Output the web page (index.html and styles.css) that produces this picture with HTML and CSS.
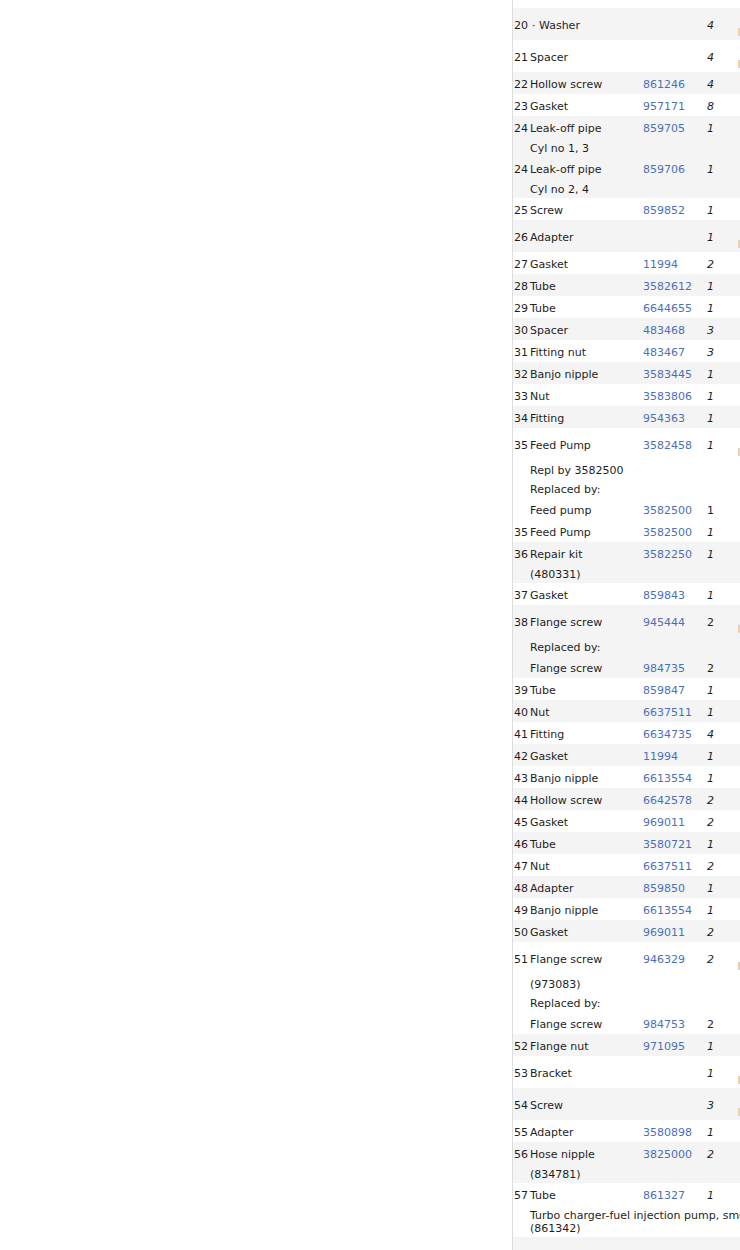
FILE: index.html
```html
<!DOCTYPE html>
<html>
<head>
<meta charset="utf-8">
<title>Parts list</title>
<link rel="stylesheet" href="styles.css">
</head>
<body>
<div class="page">
  <div class="gutter"></div>
  <div class="parts">
    <div class="item even">
      <div class="row tall"><span class="num">20</span><span class="desc"><span class="dot">·</span> Washer</span><span class="part"></span><span class="qty">4</span><span class="cart"></span></div>
    </div>
    <div class="item">
      <div class="row tall"><span class="num">21</span><span class="desc">Spacer</span><span class="part"></span><span class="qty">4</span><span class="cart"></span></div>
    </div>
    <div class="item even">
      <div class="row"><span class="num">22</span><span class="desc">Hollow screw</span><span class="part"><a href="#">861246</a></span><span class="qty">4</span></div>
    </div>
    <div class="item">
      <div class="row"><span class="num">23</span><span class="desc">Gasket</span><span class="part"><a href="#">957171</a></span><span class="qty">8</span></div>
    </div>
    <div class="item even">
      <div class="row"><span class="num">24</span><span class="desc">Leak-off pipe</span><span class="part"><a href="#">859705</a></span><span class="qty">1</span></div>
      <div class="note">Cyl no 1, 3</div>
    </div>
    <div class="item even">
      <div class="row"><span class="num">24</span><span class="desc">Leak-off pipe</span><span class="part"><a href="#">859706</a></span><span class="qty">1</span></div>
      <div class="note">Cyl no 2, 4</div>
    </div>
    <div class="item">
      <div class="row"><span class="num">25</span><span class="desc">Screw</span><span class="part"><a href="#">859852</a></span><span class="qty">1</span></div>
    </div>
    <div class="item even">
      <div class="row tall"><span class="num">26</span><span class="desc">Adapter</span><span class="part"></span><span class="qty">1</span><span class="cart"></span></div>
    </div>
    <div class="item">
      <div class="row"><span class="num">27</span><span class="desc">Gasket</span><span class="part"><a href="#">11994</a></span><span class="qty">2</span></div>
    </div>
    <div class="item even">
      <div class="row"><span class="num">28</span><span class="desc">Tube</span><span class="part"><a href="#">3582612</a></span><span class="qty">1</span></div>
    </div>
    <div class="item">
      <div class="row"><span class="num">29</span><span class="desc">Tube</span><span class="part"><a href="#">6644655</a></span><span class="qty">1</span></div>
    </div>
    <div class="item even">
      <div class="row"><span class="num">30</span><span class="desc">Spacer</span><span class="part"><a href="#">483468</a></span><span class="qty">3</span></div>
    </div>
    <div class="item">
      <div class="row"><span class="num">31</span><span class="desc">Fitting nut</span><span class="part"><a href="#">483467</a></span><span class="qty">3</span></div>
    </div>
    <div class="item even">
      <div class="row"><span class="num">32</span><span class="desc">Banjo nipple</span><span class="part"><a href="#">3583445</a></span><span class="qty">1</span></div>
    </div>
    <div class="item">
      <div class="row"><span class="num">33</span><span class="desc">Nut</span><span class="part"><a href="#">3583806</a></span><span class="qty">1</span></div>
    </div>
    <div class="item even">
      <div class="row"><span class="num">34</span><span class="desc">Fitting</span><span class="part"><a href="#">954363</a></span><span class="qty">1</span></div>
    </div>
    <div class="item">
      <div class="row tall"><span class="num">35</span><span class="desc">Feed Pump</span><span class="part"><a href="#">3582458</a></span><span class="qty">1</span><span class="cart"></span></div>
      <div class="note">Repl by 3582500</div>
      <div class="note">Replaced by:</div>
      <div class="row"><span class="num"></span><span class="desc">Feed pump</span><span class="part"><a href="#">3582500</a></span><span class="qty plain">1</span></div>
    </div>
    <div class="item">
      <div class="row"><span class="num">35</span><span class="desc">Feed Pump</span><span class="part"><a href="#">3582500</a></span><span class="qty">1</span></div>
    </div>
    <div class="item even">
      <div class="row"><span class="num">36</span><span class="desc">Repair kit</span><span class="part"><a href="#">3582250</a></span><span class="qty">1</span></div>
      <div class="note">(480331)</div>
    </div>
    <div class="item">
      <div class="row"><span class="num">37</span><span class="desc">Gasket</span><span class="part"><a href="#">859843</a></span><span class="qty">1</span></div>
    </div>
    <div class="item even">
      <div class="row tall"><span class="num">38</span><span class="desc">Flange screw</span><span class="part"><a href="#">945444</a></span><span class="qty plain">2</span><span class="cart"></span></div>
      <div class="note">Replaced by:</div>
      <div class="row"><span class="num"></span><span class="desc">Flange screw</span><span class="part"><a href="#">984735</a></span><span class="qty plain">2</span></div>
    </div>
    <div class="item">
      <div class="row"><span class="num">39</span><span class="desc">Tube</span><span class="part"><a href="#">859847</a></span><span class="qty">1</span></div>
    </div>
    <div class="item even">
      <div class="row"><span class="num">40</span><span class="desc">Nut</span><span class="part"><a href="#">6637511</a></span><span class="qty">1</span></div>
    </div>
    <div class="item">
      <div class="row"><span class="num">41</span><span class="desc">Fitting</span><span class="part"><a href="#">6634735</a></span><span class="qty">4</span></div>
    </div>
    <div class="item even">
      <div class="row"><span class="num">42</span><span class="desc">Gasket</span><span class="part"><a href="#">11994</a></span><span class="qty">1</span></div>
    </div>
    <div class="item">
      <div class="row"><span class="num">43</span><span class="desc">Banjo nipple</span><span class="part"><a href="#">6613554</a></span><span class="qty">1</span></div>
    </div>
    <div class="item even">
      <div class="row"><span class="num">44</span><span class="desc">Hollow screw</span><span class="part"><a href="#">6642578</a></span><span class="qty">2</span></div>
    </div>
    <div class="item">
      <div class="row"><span class="num">45</span><span class="desc">Gasket</span><span class="part"><a href="#">969011</a></span><span class="qty">2</span></div>
    </div>
    <div class="item even">
      <div class="row"><span class="num">46</span><span class="desc">Tube</span><span class="part"><a href="#">3580721</a></span><span class="qty">1</span></div>
    </div>
    <div class="item">
      <div class="row"><span class="num">47</span><span class="desc">Nut</span><span class="part"><a href="#">6637511</a></span><span class="qty">2</span></div>
    </div>
    <div class="item even">
      <div class="row"><span class="num">48</span><span class="desc">Adapter</span><span class="part"><a href="#">859850</a></span><span class="qty">1</span></div>
    </div>
    <div class="item">
      <div class="row"><span class="num">49</span><span class="desc">Banjo nipple</span><span class="part"><a href="#">6613554</a></span><span class="qty">1</span></div>
    </div>
    <div class="item even">
      <div class="row"><span class="num">50</span><span class="desc">Gasket</span><span class="part"><a href="#">969011</a></span><span class="qty">2</span></div>
    </div>
    <div class="item">
      <div class="row tall"><span class="num">51</span><span class="desc">Flange screw</span><span class="part"><a href="#">946329</a></span><span class="qty">2</span><span class="cart"></span></div>
      <div class="note">(973083)</div>
      <div class="note">Replaced by:</div>
      <div class="row"><span class="num"></span><span class="desc">Flange screw</span><span class="part"><a href="#">984753</a></span><span class="qty plain">2</span></div>
    </div>
    <div class="item even">
      <div class="row"><span class="num">52</span><span class="desc">Flange nut</span><span class="part"><a href="#">971095</a></span><span class="qty">1</span></div>
    </div>
    <div class="item">
      <div class="row tall"><span class="num">53</span><span class="desc">Bracket</span><span class="part"></span><span class="qty">1</span><span class="cart"></span></div>
    </div>
    <div class="item even">
      <div class="row tall"><span class="num">54</span><span class="desc">Screw</span><span class="part"></span><span class="qty">3</span><span class="cart"></span></div>
    </div>
    <div class="item">
      <div class="row"><span class="num">55</span><span class="desc">Adapter</span><span class="part"><a href="#">3580898</a></span><span class="qty">1</span></div>
    </div>
    <div class="item even">
      <div class="row"><span class="num">56</span><span class="desc">Hose nipple</span><span class="part"><a href="#">3825000</a></span><span class="qty">2</span></div>
      <div class="note">(834781)</div>
    </div>
    <div class="item">
      <div class="row"><span class="num">57</span><span class="desc">Tube</span><span class="part"><a href="#">861327</a></span><span class="qty">1</span></div>
      <div class="note">Turbo charger-fuel injection pump, smoke limiter<br>(861342)</div>
    </div>
    <div class="item even">
      <div class="row tall"><span class="num"></span><span class="desc"></span><span class="part"></span><span class="qty"></span></div>
    </div>
  </div>
</div>
</body>
</html>
```

FILE: styles.css
```css
html, body {
  margin: 0;
  padding: 0;
  overflow: hidden;
  background: #ffffff;
}

body {
  width: 740px;
  height: 1250px;
  font-family: "DejaVu Sans", Verdana, sans-serif;
  font-size: 11px;
  color: #1e1e1e;
}

.page {
  display: flex;
}

.gutter {
  flex: 0 0 512px;
}

.parts {
  flex: 0 0 420px;
  border-left: 1px solid #dddddd;
  padding-top: 8px;
}

.item.even {
  background: #f4f4f4;
}

.row {
  display: grid;
  grid-template-columns: 17px 113px 64px 31px 1fr;
  align-items: center;
  box-sizing: border-box;
  height: 22px;
  padding-top: 2px;
  white-space: nowrap;
}

.row.tall {
  height: 32px;
}

.num {
  padding-left: 1px;
}

.dot {
  padding-left: 2px;
}

.part a {
  color: #4a70b8;
  text-decoration: none;
}

.qty {
  font-style: italic;
}

.qty.plain {
  font-style: normal;
}

.note {
  padding: 4px 0 2px 17px;
  line-height: 13px;
  white-space: nowrap;
}

.cart {
  align-self: end;
  margin-bottom: 4px;
  width: 20px;
  height: 8px;
  background: #e9d3a6;
}
```
